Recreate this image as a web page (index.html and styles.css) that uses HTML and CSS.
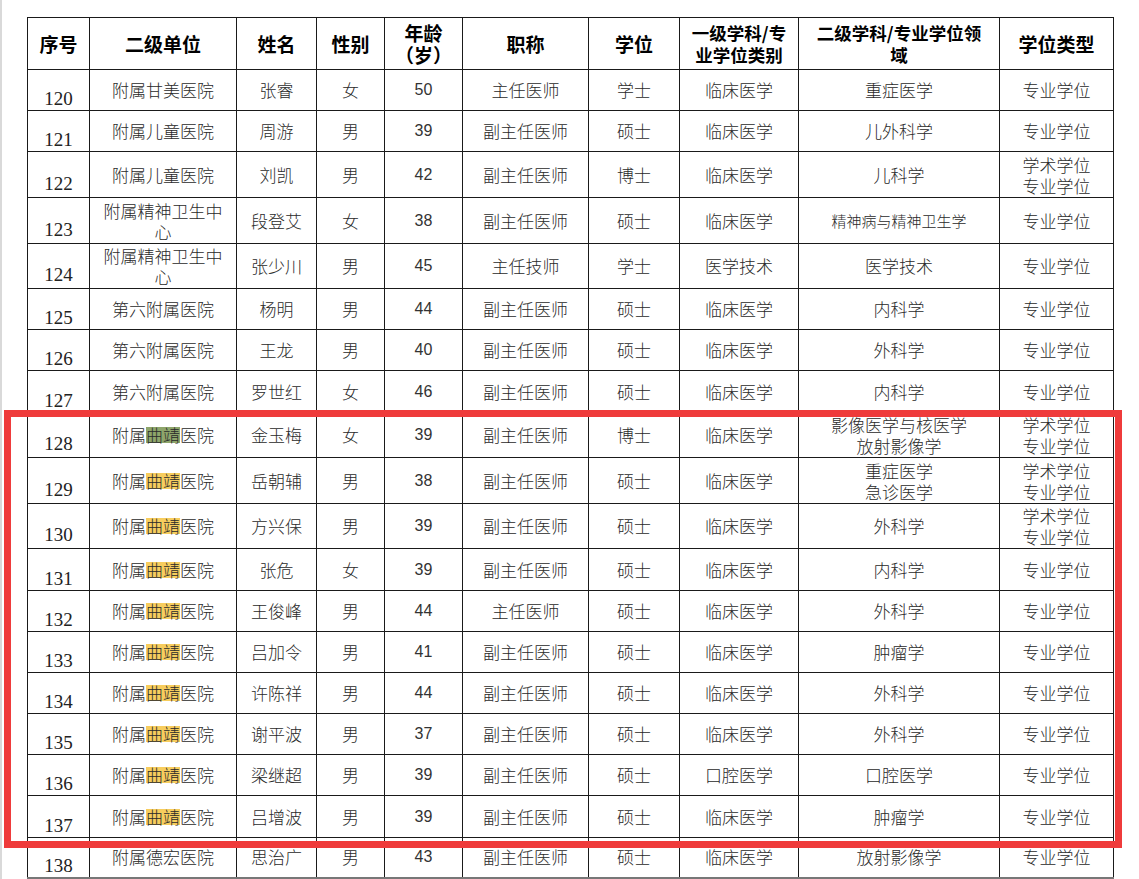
FILE: index.html
```html
<!DOCTYPE html>
<html lang="zh-CN">
<head>
<meta charset="utf-8">
<title>名单</title>
<link rel="stylesheet" href="styles.css">
</head>
<body>
<div class="page">
  <table class="roster">
    <colgroup>
      <col class="c1"><col class="c2"><col class="c3"><col class="c4"><col class="c5">
      <col class="c6"><col class="c7"><col class="c8"><col class="c9"><col class="c10">
    </colgroup>
    <thead>
      <tr class="h52">
        <th>序号</th>
        <th>二级单位</th>
        <th>姓名</th>
        <th>性别</th>
        <th class="two">年龄<br>（岁）</th>
        <th>职称</th>
        <th>学位</th>
        <th class="two sm">一级学科/专<br>业学位类别</th>
        <th class="two sm">二级学科/专业学位领<br>域</th>
        <th>学位类型</th>
      </tr>
    </thead>
    <tbody>
      <tr class="h41"><td class="no">120</td><td>附属甘美医院</td><td>张睿</td><td>女</td><td class="age">50</td><td>主任医师</td><td>学士</td><td>临床医学</td><td>重症医学</td><td>专业学位</td></tr>
      <tr class="h41"><td class="no">121</td><td>附属儿童医院</td><td>周游</td><td>男</td><td class="age">39</td><td>副主任医师</td><td>硕士</td><td>临床医学</td><td>儿外科学</td><td>专业学位</td></tr>
      <tr class="h46"><td class="no">122</td><td>附属儿童医院</td><td>刘凯</td><td>男</td><td class="age">42</td><td>副主任医师</td><td>博士</td><td>临床医学</td><td>儿科学</td><td class="two">学术学位<br>专业学位</td></tr>
      <tr class="h46"><td class="no">123</td><td class="two">附属精神卫生中<br>心</td><td>段登艾</td><td>女</td><td class="age">38</td><td>副主任医师</td><td>硕士</td><td>临床医学</td><td class="small">精神病与精神卫生学</td><td>专业学位</td></tr>
      <tr class="h45"><td class="no">124</td><td class="two">附属精神卫生中<br>心</td><td>张少川</td><td>男</td><td class="age">45</td><td>主任技师</td><td>学士</td><td>医学技术</td><td>医学技术</td><td>专业学位</td></tr>
      <tr class="h41"><td class="no">125</td><td>第六附属医院</td><td>杨明</td><td>男</td><td class="age">44</td><td>副主任医师</td><td>硕士</td><td>临床医学</td><td>内科学</td><td>专业学位</td></tr>
      <tr class="h41"><td class="no">126</td><td>第六附属医院</td><td>王龙</td><td>男</td><td class="age">40</td><td>副主任医师</td><td>硕士</td><td>临床医学</td><td>外科学</td><td>专业学位</td></tr>
      <tr class="h42"><td class="no">127</td><td>第六附属医院</td><td>罗世红</td><td>女</td><td class="age">46</td><td>副主任医师</td><td>硕士</td><td>临床医学</td><td>内科学</td><td>专业学位</td></tr>
      <tr class="h45"><td class="no">128</td><td>附属<span class="hl green">曲靖</span>医院</td><td>金玉梅</td><td>女</td><td class="age">39</td><td>副主任医师</td><td>博士</td><td>临床医学</td><td class="two">影像医学与核医学<br>放射影像学</td><td class="two">学术学位<br>专业学位</td></tr>
      <tr class="h46"><td class="no">129</td><td>附属<span class="hl">曲靖</span>医院</td><td>岳朝辅</td><td>男</td><td class="age">38</td><td>副主任医师</td><td>硕士</td><td>临床医学</td><td class="two">重症医学<br>急诊医学</td><td class="two">学术学位<br>专业学位</td></tr>
      <tr class="h45"><td class="no">130</td><td>附属<span class="hl">曲靖</span>医院</td><td>方兴保</td><td>男</td><td class="age">39</td><td>副主任医师</td><td>硕士</td><td>临床医学</td><td>外科学</td><td class="two">学术学位<br>专业学位</td></tr>
      <tr class="h42"><td class="no">131</td><td>附属<span class="hl">曲靖</span>医院</td><td>张危</td><td>女</td><td class="age">39</td><td>副主任医师</td><td>硕士</td><td>临床医学</td><td>内科学</td><td>专业学位</td></tr>
      <tr class="h41"><td class="no">132</td><td>附属<span class="hl">曲靖</span>医院</td><td>王俊峰</td><td>男</td><td class="age">44</td><td>主任医师</td><td>硕士</td><td>临床医学</td><td>外科学</td><td>专业学位</td></tr>
      <tr class="h41"><td class="no">133</td><td>附属<span class="hl">曲靖</span>医院</td><td>吕加令</td><td>男</td><td class="age">41</td><td>副主任医师</td><td>硕士</td><td>临床医学</td><td>肿瘤学</td><td>专业学位</td></tr>
      <tr class="h41"><td class="no">134</td><td>附属<span class="hl">曲靖</span>医院</td><td>许陈祥</td><td>男</td><td class="age">44</td><td>副主任医师</td><td>硕士</td><td>临床医学</td><td>外科学</td><td>专业学位</td></tr>
      <tr class="h41"><td class="no">135</td><td>附属<span class="hl">曲靖</span>医院</td><td>谢平波</td><td>男</td><td class="age">37</td><td>副主任医师</td><td>硕士</td><td>临床医学</td><td>外科学</td><td>专业学位</td></tr>
      <tr class="h41"><td class="no">136</td><td>附属<span class="hl">曲靖</span>医院</td><td>梁继超</td><td>男</td><td class="age">39</td><td>副主任医师</td><td>硕士</td><td>口腔医学</td><td>口腔医学</td><td>专业学位</td></tr>
      <tr class="h42"><td class="no">137</td><td>附属<span class="hl">曲靖</span>医院</td><td>吕增波</td><td>男</td><td class="age">39</td><td>副主任医师</td><td>硕士</td><td>临床医学</td><td>肿瘤学</td><td>专业学位</td></tr>
      <tr class="h40 last"><td class="no">138</td><td>附属德宏医院</td><td>思治广</td><td>男</td><td class="age">43</td><td>副主任医师</td><td>硕士</td><td>临床医学</td><td>放射影像学</td><td>专业学位</td></tr>
    </tbody>
  </table>
  <div class="redbox"></div>
</div>
</body>
</html>
```

FILE: styles.css
```css
html, body {
  margin: 0;
  padding: 0;
  background: #ffffff;
}

.page {
  position: relative;
  height: 879px;
  box-sizing: border-box;
  border-left: 2px solid #d9d9d9;
  padding: 17px 0 0 25px;
  overflow: hidden;
  font-family: "Noto Sans CJK SC", "Noto Sans", sans-serif;
}

.roster {
  border-collapse: collapse;
  table-layout: fixed;
  width: 1087px;
  color: #2a2a2a;
}

.c1 { width: 62px; }
.c2 { width: 147px; }
.c3 { width: 80px; }
.c4 { width: 68px; }
.c5 { width: 78px; }
.c6 { width: 126px; }
.c7 { width: 91px; }
.c8 { width: 119px; }
.c9 { width: 201px; }
.c10 { width: 114px; }

.roster th,
.roster td {
  border: 1px solid #1a1a1a;
  padding: 0;
  text-align: center;
  vertical-align: middle;
  white-space: nowrap;
}

.roster th {
  font-size: 19px;
  font-weight: 700;
  color: #000;
  line-height: 22px;
}

.roster th.sm {
  font-size: 17.5px;
  line-height: 22px;
}

.roster td {
  font-size: 17px;
  font-weight: 300;
  line-height: 22px;
}

.roster td.two {
  line-height: 21px;
}

.roster td.small {
  font-size: 15px;
}

.roster td.no {
  font-family: "Liberation Serif", "Times New Roman", serif;
  font-size: 19px;
  font-weight: 400;
  line-height: 20px;
  padding-top: 18px;
  color: #222;
}

.roster td.age {
  font-family: "Liberation Sans", Arial, sans-serif;
  font-size: 16px;
  font-weight: 400;
  color: #333;
}

.h52 { height: 52px; }
.h46 { height: 46px; }
.h45 { height: 45px; }
.h42 { height: 42px; }
.h41 { height: 41px; }
.h40 { height: 40px; }

.roster tr.last td {
  border-bottom: 2px solid #777;
}

.hl {
  display: inline-block;
  line-height: 16px;
  height: 16px;
  background: #f7cd5e;
}

.hl.green {
  background: #8ea56b;
}

.redbox {
  position: absolute;
  left: 2px;
  top: 410px;
  width: 1118px;
  height: 438px;
  box-sizing: border-box;
  border: 7px solid #ef3b3b;
}
```
